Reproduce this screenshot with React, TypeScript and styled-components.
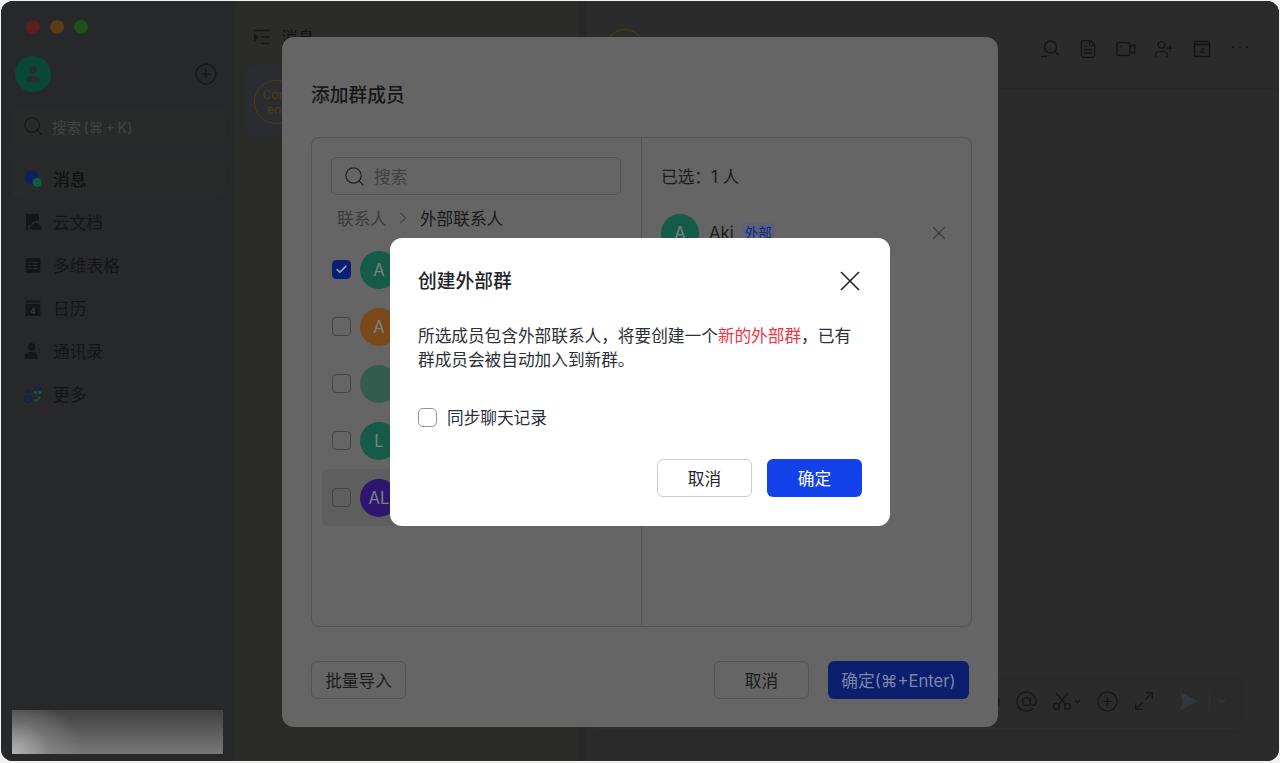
import React from "react";
import styled, { createGlobalStyle } from "styled-components";
import { Search, CirclePlus, X, Check, ChevronRight, ChevronDown, FileText, UserPlus, AtSign, Maximize2, Smile } from "lucide-react";

const GlobalStyle = createGlobalStyle`
  html, body {
    margin: 0;
    height: 100%;
    background: #f2f2f2;
    font-family: Inter, "Noto Sans CJK SC", sans-serif;
  }
  #root { height: 100%; }
  * { box-sizing: border-box; }
`;

const Window = styled.div`
  position: relative;
  display: flex;
  width: 1278px;
  height: 760px;
  margin: 1px 0 0 1px;
  border-radius: 12px;
  overflow: hidden;
  background: #27282a;
`;

/* sidebar */
const Sidebar = styled.aside`
  width: 234px;
  flex-shrink: 0;
  padding: 16px 11px 0;
  background: #27282a;
  display: flex;
  flex-direction: column;
`;
const Lights = styled.div`
  display: flex;
  gap: 10px;
  padding-left: 14px;
  height: 20px;
  align-items: center;
`;
const Light = styled.span<{ $c: string }>`
  width: 14px;
  height: 14px;
  border-radius: 50%;
  background: ${(p) => p.$c};
`;
const ProfileRow = styled.div`
  display: flex;
  align-items: center;
  justify-content: space-between;
  padding: 0 6px 0 3px;
  margin-top: 19px;
  color: #17181a;
`;
const ProfileAvatar = styled.div`
  width: 36px;
  height: 36px;
  border-radius: 50%;
  background: #0a4836;
  display: flex;
  align-items: center;
  justify-content: center;
`;
const SideSearch = styled.div`
  height: 38px;
  margin-top: 15px;
  padding: 0 10px;
  border-radius: 8px;
  background: #292a2a;
  display: flex;
  align-items: center;
  gap: 8px;
  width: 213px;
  font-size: 14.5px;
  word-spacing: -1.7px;
  color: #424344;
`;
const NavList = styled.nav`
  margin-top: 14px;
  display: flex;
  flex-direction: column;
  gap: 3px;
`;
const NavItem = styled.div<{ $active?: boolean }>`
  height: 40px;
  width: 213px;
  padding-left: 11px;
  display: flex;
  align-items: center;
  gap: 10px;
  border-radius: 8px;
  font-size: 16.67px;
  font-weight: ${(p) => (p.$active ? 500 : 400)};
  color: ${(p) => (p.$active ? "#111212" : "#151516")};
  background: ${(p) => (p.$active ? "#292a2a" : "transparent")};
`;
const RedactedPatch = styled.div`
  position: absolute;
  left: 11px;
  bottom: 7px;
  width: 211px;
  height: 44px;
  background:
    radial-gradient(ellipse 70px 60px at 0% 100%, rgba(190, 190, 190, 0.85) 0%, rgba(150, 150, 150, 0.4) 55%, rgba(120, 120, 120, 0) 100%),
    linear-gradient(180deg, #404040 0%, #787878 100%);
`;

/* conversation list */
const ListPanel = styled.section`
  width: 344px;
  flex-shrink: 0;
  background: #2b2b2a;
  padding: 0 8px 0 9px;
  border-left: 1px solid #292a2a;
`;
const ListHeader = styled.div`
  height: 65px;
  padding: 7px 8px 0;
  display: flex;
  align-items: center;
  gap: 10px;
  font-size: 16.67px;
  color: #141414;
`;
const ConversationCard = styled.div`
  height: 72px;
  background: #2a2c30;
  border-radius: 8px;
  padding-left: 9px;
  display: flex;
  align-items: center;
`;
const BotAvatar = styled.div`
  width: 44px;
  height: 44px;
  border-radius: 50%;
  border: 1px solid #4d3d12;
  color: #4d3d12;
  font-size: 12px;
  line-height: 15px;
  text-align: center;
  display: flex;
  flex-direction: column;
  justify-content: center;
`;

/* chat */
const ChatPanel = styled.section`
  flex: 1;
  margin-left: 7px;
  background: #2b2b2b;
  display: flex;
  flex-direction: column;
  border-left: 1px solid #2a2a2a;
`;
const ChatHeader = styled.header`
  height: 88px;
  flex-shrink: 0;
  border-bottom: 1px solid #282828;
  display: flex;
  align-items: center;
  gap: 18px;
  padding: 8px 29px 0 18px;
  color: #151515;
`;
const ChatAvatar = styled.div`
  width: 40px;
  height: 40px;
  margin-right: auto;
  border-radius: 50%;
  border: 1px solid #4d3d12;
`;
const ChatBody = styled.div`
  flex: 1;
`;
const Composer = styled.div`
  height: 56px;
  margin: 0 32px 32px 0;
  border: 1px solid #2e2e2e;
  border-radius: 8px;
  display: flex;
  align-items: center;
  justify-content: flex-end;
  gap: 14px;
  padding-right: 17px;
  color: #171717;
`;
const SendSlot = styled.span`
  margin-left: 10.5px;
  margin-right: -4px;
  display: flex;
`;
const ComposerDivider = styled.span`
  width: 1px;
  height: 20px;
  background: #313131;
  margin-right: -9px;
`;

/* member modal */
const MemberModal = styled.div`
  position: absolute;
  left: 281px;
  top: 36px;
  width: 716px;
  height: 690px;
  background: #656565;
  border-radius: 12px;
  padding: 0 26px 0 29px;
  display: flex;
  flex-direction: column;
`;
const ModalTitle = styled.h2`
  margin: 0;
  height: 100px;
  display: flex;
  align-items: center;
  padding-top: 12px;
  font-size: 18.75px;
  font-weight: 500;
  color: #171717;
`;
const PickerBox = styled.div`
  height: 490px;
  border: 1px solid #545454;
  border-radius: 8px;
  display: flex;
`;
const PickerLeft = styled.div`
  width: 330px;
  padding: 19px 10px 0;
  border-right: 1px solid #545454;
`;
const PickerRight = styled.div`
  flex: 1;
  padding: 19px 21px 0 19px;
`;
const PickerSearch = styled.div`
  width: 290px;
  height: 38px;
  margin-left: 9px;
  border: 1px solid #545454;
  border-radius: 6px;
  display: flex;
  align-items: center;
  gap: 8px;
  padding-left: 11px;
  font-size: 16.67px;
  color: #414141;
`;
const Crumbs = styled.div`
  height: 46px;
  padding-left: 15px;
  display: flex;
  align-items: center;
  gap: 6.5px;
  font-size: 16.67px;
  color: #3b3b3b;
`;
const CrumbCurrent = styled.span`
  color: #191919;
`;
const MemberRow = styled.div<{ $hover?: boolean }>`
  height: 57px;
  padding-left: 10px;
  display: flex;
  align-items: center;
  gap: 9px;
  border-radius: 6px;
  background: ${(p) => (p.$hover ? "#5e5e5e" : "transparent")};
`;
const Tick = styled.span<{ $checked?: boolean; $light?: boolean }>`
  width: 19px;
  height: 19px;
  flex-shrink: 0;
  border-radius: ${(p) => (p.$light ? "5px" : "4px")};
  border: 1.5px solid ${(p) => (p.$light ? "#8f959e" : p.$checked ? "#0b1f72" : "#444")};
  background: ${(p) => (p.$checked ? "#0b1f72" : "transparent")};
  color: #a9adc0;
  display: flex;
  align-items: center;
  justify-content: center;
`;
const MemberAvatar = styled.div<{ $c: string }>`
  width: 38px;
  height: 38px;
  flex-shrink: 0;
  border-radius: 50%;
  background: ${(p) => p.$c};
  color: #78847e;
  font-size: 16.67px;
  display: flex;
  align-items: center;
  justify-content: center;
`;
const SelectedLabel = styled.div`
  height: 38px;
  display: flex;
  align-items: center;
  font-size: 16.67px;
  color: #1c1c1c;
`;
const SelectedRow = styled.div`
  margin-top: 19px;
  display: flex;
  align-items: center;
  gap: 10px;
  font-size: 16.67px;
  color: #1c1c1c;
`;
const ExternalTag = styled.span`
  margin-left: -2px;
  padding: 0 3px;
  height: 20px;
  line-height: 20px;
  border-radius: 4px;
  background: #5b6178;
  color: #0f2586;
  font-size: 13.5px;
`;
const RemoveIcon = styled.span`
  margin-left: auto;
  color: #3c3c3c;
  display: flex;
`;
const ModalFooter = styled.footer`
  flex: 1;
  display: flex;
  align-items: center;
  gap: 19px;
  padding: 5px 3px 0 0;
`;
const GhostButton = styled.button`
  width: 95px;
  height: 38px;
  padding: 0;
  border: 1px solid #545454;
  border-radius: 6px;
  background: transparent;
  color: #1b1b1b;
  font: inherit;
  font-size: 16.67px;
`;
const PushRight = styled.div`
  margin-left: auto;
`;
const DimPrimary = styled.button`
  width: 141px;
  height: 38px;
  padding: 0;
  border: none;
  border-radius: 6px;
  background: #0b1f6e;
  color: #7e85a8;
  font: inherit;
  font-size: 16.67px;
`;

/* confirm dialog */
const Dialog = styled.div`
  position: absolute;
  left: 389px;
  top: 237px;
  width: 500px;
  height: 288px;
  background: #fff;
  border-radius: 12px;
  padding: 0 28px;
  display: flex;
  flex-direction: column;
`;
const DialogHead = styled.div`
  height: 86px;
  display: flex;
  align-items: center;
  justify-content: space-between;
  padding-right: 2px;
  color: #1f2329;
`;
const DialogTitle = styled.h3`
  margin: -3px 0 0;
  font-size: 18.75px;
  font-weight: 500;
`;
const DialogText = styled.p`
  margin: 0;
  font-size: 16.67px;
  line-height: 24.2px;
  color: #2b2f36;
`;
const Danger = styled.span`
  color: #f5333f;
`;
const SyncRow = styled.label`
  margin-top: 33px;
  display: flex;
  align-items: center;
  gap: 10px;
  font-size: 16.67px;
  color: #2b2f36;
`;
const DialogFooter = styled.div`
  margin-top: 30px;
  display: flex;
  justify-content: flex-end;
  gap: 15px;
`;
const CancelButton = styled.button`
  width: 95px;
  height: 38px;
  padding: 0;
  border: 1.5px solid #cbced1;
  border-radius: 6px;
  background: #fff;
  color: #1f2329;
  font: inherit;
  font-size: 16.67px;
`;
const ConfirmButton = styled(CancelButton)`
  border: none;
  background: #1341ea;
  color: #fff;
`;

const members = [
  { letter: "A", color: "#165a48", checked: true },
  { letter: "A", color: "#7a481a" },
  { letter: "", color: "#335c4e" },
  { letter: "L", color: "#165a48" },
  { letter: "AL", color: "#2f1570", hover: true },
];

const NavGlyph = ({ name }: { name: string }) => {
  const fill = "#151617";
  return (
    <svg width="20" height="20" viewBox="0 0 20 20">
      {name === "chat" && (
        <>
          <circle cx="8.500" cy="8.500" r="7" fill="#0e1f5c" />
          <circle cx="14" cy="13.500" r="4.500" fill="#0f5a48" />
        </>
      )}
      {name === "doc" && (
        <>
          <path d="M3 2h12l1 1v6h-3a5 5 0 0 0-5 4H5v5H3z" fill={fill} />
          <path d="M9 18a3 3 0 0 1 1-5.500a4 4 0 0 1 7 1a2.400 2.400 0 0 1 0 4.500z" fill={fill} />
        </>
      )}
      {name === "grid" && (
        <>
          <rect x="2.500" y="3" width="15" height="15" rx="1.500" fill={fill} />
          <path d="M5.500 7.500h2.500M10 7.500h4.500M5.500 10.500h2.500M10 10.500h4.500M5.500 13.500h2.500M10 13.500h4.500" stroke="#2c2c2c" strokeWidth="1.200" />
        </>
      )}
      {name === "cal" && (
        <>
          <rect x="2.500" y="2.500" width="15" height="2" fill={fill} />
          <rect x="2.500" y="6" width="15" height="12" fill={fill} />
          <text x="10" y="15.500" fontSize="8" fontWeight="700" textAnchor="middle" fill="#3a3a3a" fontFamily="Inter">4</text>
        </>
      )}
      {name === "user" && (
        <>
          <circle cx="8.500" cy="6" r="3.800" fill={fill} />
          <path d="M1.500 18v-2.500c0-3 3-4.500 7-4.500s6 1.500 6 4.500V18z" fill={fill} />
          <path d="M15.500 8h2M16 11h1.500" stroke={fill} strokeWidth="1" />
        </>
      )}
      {name === "more" && (
        <>
          <path d="M2 6.500l2 1.500 3.500-2.500" stroke="#0e1f5c" strokeWidth="1.500" fill="none" />
          <rect x="11" y="3" width="3" height="3" rx="1" fill="#0e1f5c" />
          <rect x="15" y="3" width="3" height="3" rx="1" fill="#0e1f5c" />
          <rect x="11" y="7" width="3" height="3" rx="1" fill="#0f5a48" />
          <rect x="15" y="7" width="3" height="3" rx="1" fill="#0f5a48" />
          <circle cx="5" cy="15" r="3.200" stroke="#0e1f5c" strokeWidth="1.200" fill="none" />
          <circle cx="5" cy="15" r="1" fill="#0e1f5c" />
          <path d="M11.500 15.500l2 1.500 4-4" stroke="#0f5a48" strokeWidth="1.600" fill="none" />
        </>
      )}
    </svg>
  );
};

const ProfileGlyph = () => (
  <svg width="16" height="18" viewBox="0 0 16 18" fill="#2a2b2c">
    <circle cx="8" cy="5" r="3.800" />
    <path d="M1.500 17v-2.500c0-2.500 2-3.500 3.500-3.500h6c1.500 0 3.500 1 3.500 3.500V17z" />
  </svg>
);

const CollapseGlyph = () => (
  <svg width="18" height="16" viewBox="0 0 18 16" stroke="#171717" strokeWidth="1.500" fill="none">
    <path d="M1 1.500h16M8 8h9M8 14.500h9" />
    <path d="M1 4.500l5.500 4L1 12.500z" fill="#171717" stroke="none" />
  </svg>
);

const SearchUserGlyph = () => (
  <svg width="20" height="20" viewBox="0 0 20 20" fill="none" stroke="currentColor" strokeWidth="1.400">
    <circle cx="10.500" cy="8" r="6" />
    <path d="M15 12.500l3.500 3.500M1 17.500h6" />
  </svg>
);
const VideoGlyph = () => (
  <svg width="20" height="18" viewBox="0 0 20 18" fill="none" stroke="currentColor" strokeWidth="1.400">
    <rect x="1" y="2.500" width="13" height="13" rx="2" />
    <path d="M14 7l4.500-2.500v9L14 11" />
    <circle cx="5" cy="6.500" r="1" fill="currentColor" stroke="none" />
  </svg>
);
const CalendarGlyph = () => (
  <svg width="20" height="18" viewBox="0 0 20 18" fill="none" stroke="currentColor" strokeWidth="1.400">
    <rect x="2.500" y="1.500" width="15" height="15" rx="1" />
    <path d="M2.500 4.500h15" />
    <text x="10" y="14" fontSize="8" fontWeight="700" textAnchor="middle" fill="currentColor" stroke="none" fontFamily="Inter">4</text>
  </svg>
);
const DotsGlyph = () => (
  <svg width="20" height="18" viewBox="0 0 20 18" fill="currentColor">
    <circle cx="3" cy="7" r="1.200" />
    <circle cx="10" cy="7" r="1.200" />
    <circle cx="17" cy="7" r="1.200" />
  </svg>
);
const ScissorsGlyph = () => (
  <svg width="30" height="20" viewBox="0 0 30 20" fill="none" stroke="currentColor" strokeWidth="1.500">
    <circle cx="4.500" cy="15.500" r="3" />
    <circle cx="15.500" cy="15.500" r="3" />
    <path d="M6.500 13.500L16 2M13.500 13.500L4 2" />
    <path d="M23 9l2.500 2.500L28 9" />
  </svg>
);
const SendGlyph = () => (
  <svg width="20" height="20" viewBox="0 0 20 20" fill="#33363a">
    <path d="M1 1l18 9-18 9 3-9z" />
  </svg>
);
const CloseGlyph = () => (
  <svg width="20" height="20" viewBox="0 0 20 20" stroke="currentColor" strokeWidth="1.600" fill="none">
    <path d="M1 1l18 18M19 1L1 19" />
  </svg>
);

export default function App() {
  return (
    <>
      <GlobalStyle />
      <Window>
        <Sidebar>
          <Lights>
            <Light $c="#5c1f20" />
            <Light $c="#5a3d12" />
            <Light $c="#1c5218" />
          </Lights>
          <ProfileRow>
            <ProfileAvatar>
              <ProfileGlyph />
            </ProfileAvatar>
            <CirclePlus size={24} strokeWidth={1.300} />
          </ProfileRow>
          <SideSearch>
            <Search size={22} color="#161616" strokeWidth={1.300} />
            <span>搜索 (⌘ + K)</span>
          </SideSearch>
          <NavList>
            <NavItem $active>
              <NavGlyph name="chat" />
              消息
            </NavItem>
            <NavItem>
              <NavGlyph name="doc" />
              云文档
            </NavItem>
            <NavItem>
              <NavGlyph name="grid" />
              多维表格
            </NavItem>
            <NavItem>
              <NavGlyph name="cal" />
              日历
            </NavItem>
            <NavItem>
              <NavGlyph name="user" />
              通讯录
            </NavItem>
            <NavItem>
              <NavGlyph name="more" />
              更多
            </NavItem>
          </NavList>
        </Sidebar>

        <ListPanel>
          <ListHeader>
            <CollapseGlyph />
            消息
          </ListHeader>
          <ConversationCard>
            <BotAvatar>
              <span>Cont</span>
              <span>ent</span>
            </BotAvatar>
          </ConversationCard>
        </ListPanel>

        <ChatPanel>
          <ChatHeader>
            <ChatAvatar />
            <SearchUserGlyph />
            <FileText size={20} strokeWidth={1.400} />
            <VideoGlyph />
            <UserPlus size={20} strokeWidth={1.400} />
            <CalendarGlyph />
            <DotsGlyph />
          </ChatHeader>
          <ChatBody />
          <Composer>
            <Smile size={23} strokeWidth={1.300} />
            <AtSign size={23} strokeWidth={1.300} />
            <ScissorsGlyph />
            <CirclePlus size={23} strokeWidth={1.300} />
            <Maximize2 size={22} strokeWidth={1.400} />
            <SendSlot>
              <SendGlyph />
            </SendSlot>
            <ComposerDivider />
            <ChevronDown size={14} color="#333" />
          </Composer>
        </ChatPanel>

        <MemberModal>
          <ModalTitle>添加群成员</ModalTitle>
          <PickerBox>
            <PickerLeft>
              <PickerSearch>
                <Search size={23} color="#222" strokeWidth={1.300} />
                搜索
              </PickerSearch>
              <Crumbs>
                联系人
                <ChevronRight size={20} color="#444" strokeWidth={1.300} />
                <CrumbCurrent>外部联系人</CrumbCurrent>
              </Crumbs>
              {members.map((m, i) => (
                <MemberRow key={i} $hover={m.hover}>
                  <Tick $checked={m.checked}>{m.checked && <Check size={13} strokeWidth={3} />}</Tick>
                  <MemberAvatar $c={m.color}>{m.letter}</MemberAvatar>
                </MemberRow>
              ))}
            </PickerLeft>
            <PickerRight>
              <SelectedLabel>已选：1 人</SelectedLabel>
              <SelectedRow>
                <MemberAvatar $c="#165a48">A</MemberAvatar>
                Aki
                <ExternalTag>外部</ExternalTag>
                <RemoveIcon>
                  <X size={22} strokeWidth={1.300} />
                </RemoveIcon>
              </SelectedRow>
            </PickerRight>
          </PickerBox>
          <ModalFooter>
            <GhostButton>批量导入</GhostButton>
            <PushRight />
            <GhostButton>取消</GhostButton>
            <DimPrimary>确定(⌘+Enter)</DimPrimary>
          </ModalFooter>
        </MemberModal>

        <Dialog>
          <DialogHead>
            <DialogTitle>创建外部群</DialogTitle>
            <CloseGlyph />
          </DialogHead>
          <DialogText>
            所选成员包含外部联系人，将要创建一个<Danger>新的外部群</Danger>，已有群成员会被自动加入到新群。
          </DialogText>
          <SyncRow>
            <Tick $light />
            同步聊天记录
          </SyncRow>
          <DialogFooter>
            <CancelButton>取消</CancelButton>
            <ConfirmButton>确定</ConfirmButton>
          </DialogFooter>
        </Dialog>

        <RedactedPatch />
      </Window>
    </>
  );
}
